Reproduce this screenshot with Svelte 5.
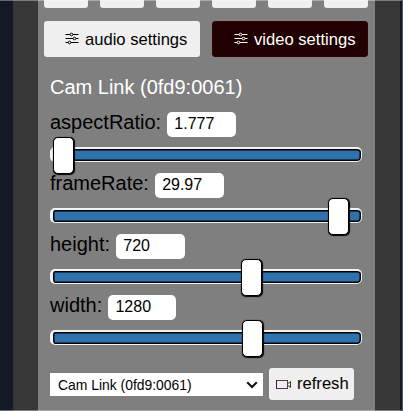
<script>
  const controls = [
    { name: 'aspectRatio', value: '1.777', pos: 3, field: 69 },
    { name: 'frameRate', value: '29.97', pos: 278, field: 69 },
    { name: 'height', value: '720', pos: 191, field: 69 },
    { name: 'width', value: '1280', pos: 192, field: 68 }
  ];
  const tabs = [0, 1, 2, 3, 4, 5];
</script>

{#snippet sliders()}
  <svg class="sliders" width="14" height="13" viewBox="0 0 14 13" fill="none" stroke="currentColor">
    <path d="M0.5 2.5H5M8 2.5H13.5M0.5 6.5H8M11 6.5H13.5M0.5 10.5H3M6 10.5H13.5" />
    <circle cx="6.5" cy="2.5" r="1.3" /><circle cx="9.5" cy="6.5" r="1.3" /><circle cx="4.5" cy="10.5" r="1.3" />
  </svg>
{/snippet}

<div class="page">
  <main>
    <div class="tabs">
      {#each tabs as tab (tab)}<span class="tab"></span>{/each}
    </div>
    <div class="modes">
      <button class="mode">{@render sliders()}<span>audio settings</span></button>
      <button class="mode active">{@render sliders()}<span>video settings</span></button>
    </div>
    <section>
      <div class="title">Cam Link (0fd9:0061)</div>
      {#each controls as c (c.name)}
        <div class="control">
          <div class="line">
            <span class="label">{c.name}:</span>
            <span class="field" style="width: {c.field}px">{c.value}</span>
          </div>
          <div class="range">
            <div class="track"></div>
            <div class="thumb" style="left: {c.pos}px"></div>
          </div>
        </div>
      {/each}
      <div class="bottom">
        <div class="select">
          <span>Cam Link (0fd9:0061)</span>
          <svg width="12" height="8" viewBox="0 0 12 8" fill="none" stroke="#111" stroke-width="2.1"><path d="M1.2 1.3L6 6L10.8 1.3" /></svg>
        </div>
        <button class="refresh">
          <svg width="16" height="11" viewBox="0 0 16 11" fill="none">
            <rect x="0.5" y="1.5" width="11" height="8" stroke="#444" />
            <path d="M0.5 1V10" stroke="#5a0c50" />
            <path d="M12 4.5L14.5 2.5V8.5L12 6.5" stroke="#333" />
          </svg>
          <span>refresh</span>
        </button>
      </div>
    </section>
  </main>
</div>

<style>
  .page {
    box-sizing: border-box;
    width: 403px;
    height: 411px;
    overflow: hidden;
    padding: 0 2px 0 13px;
    border-right: 1px solid #555b65;
    background: #131a26;
    font-family: "Liberation Sans", Arial, sans-serif;
    font-size: 20px;
    color: #000;
    position: relative;
  }
  .page::before, .page::after {
    content: "";
    position: absolute;
    left: 0;
    right: 0;
    height: 1px;
    background: rgba(255, 255, 255, 0.35);
    z-index: 3;
  }
  .page::before { top: 0; }
  .page::after { bottom: 0; }
  main {
    box-sizing: border-box;
    height: 411px;
    border: solid #373737;
    border-width: 0 25px;
    background: #7f7f7f;
    padding: 0 7px 0 6px;
  }
  .tabs { display: flex; justify-content: space-between; height: 8px; }
  .tab { width: 44px; background: #efefef; border-radius: 0 0 3px 3px; }
  .modes { display: flex; justify-content: space-between; margin-top: 13px; }
  button {
    box-sizing: border-box;
    margin: 0;
    border: 0;
    border-radius: 3px;
    background: #efefef;
    color: #000;
    font: 16.6px "Liberation Sans", Arial, sans-serif;
    display: flex;
    align-items: center;
    white-space: nowrap;
  }
  .mode { width: 156px; height: 36px; padding: 0 0 0 21px; gap: 6px; }
  .mode span { padding-top: 2px; }
  .active { background: #200000; color: #fff; border: 1px solid #300202; padding-left: 21px; gap: 6px; }
  .sliders { flex: none; margin-top: -1px; }
  section { padding: 18px 0 0 6px; }
  .title { height: 24px; line-height: 24px; color: #fff; white-space: nowrap; }
  .control { height: 61px; padding-top: 13px; box-sizing: border-box; }
  .line { display: flex; height: 25px; }
  .label { line-height: 21px; margin-right: 6.2px; }
  .field {
    box-sizing: border-box;
    height: 25px;
    padding-left: 7px;
    border-radius: 5px;
    background: #fff;
    font-size: 16px;
    line-height: 24px;
  }
  .range { position: relative; width: 312px; height: 15px; margin-top: 10px; }
  .track {
    box-sizing: border-box;
    height: 15px;
    border: 2px solid #f2f2f2;
    border-left-width: 3px;
    border-right-width: 1px;
    border-bottom-width: 1px;
    border-radius: 5px;
    background: #3072ac;
    box-shadow: inset 0 0 0 1.5px #000;
  }
  .thumb {
    position: absolute;
    top: -10px;
    box-sizing: border-box;
    width: 21px;
    height: 37px;
    border: 1.5px solid #000;
    border-radius: 5px;
    background: #fff;
    box-shadow: 0.5px 0.5px 1px #000;
  }
  .bottom { display: flex; align-items: flex-start; margin-top: 25px; }
  .select {
    box-sizing: border-box;
    width: 213px;
    height: 23px;
    margin: 5px 6px 0 0;
    padding: 0 5px 0 8px;
    background: #fff;
    display: flex;
    align-items: center;
    justify-content: space-between;
    font-size: 13.9px;
  }
  .refresh { width: 85px; height: 32px; padding: 0 0 0 7px; gap: 5px; }
</style>
